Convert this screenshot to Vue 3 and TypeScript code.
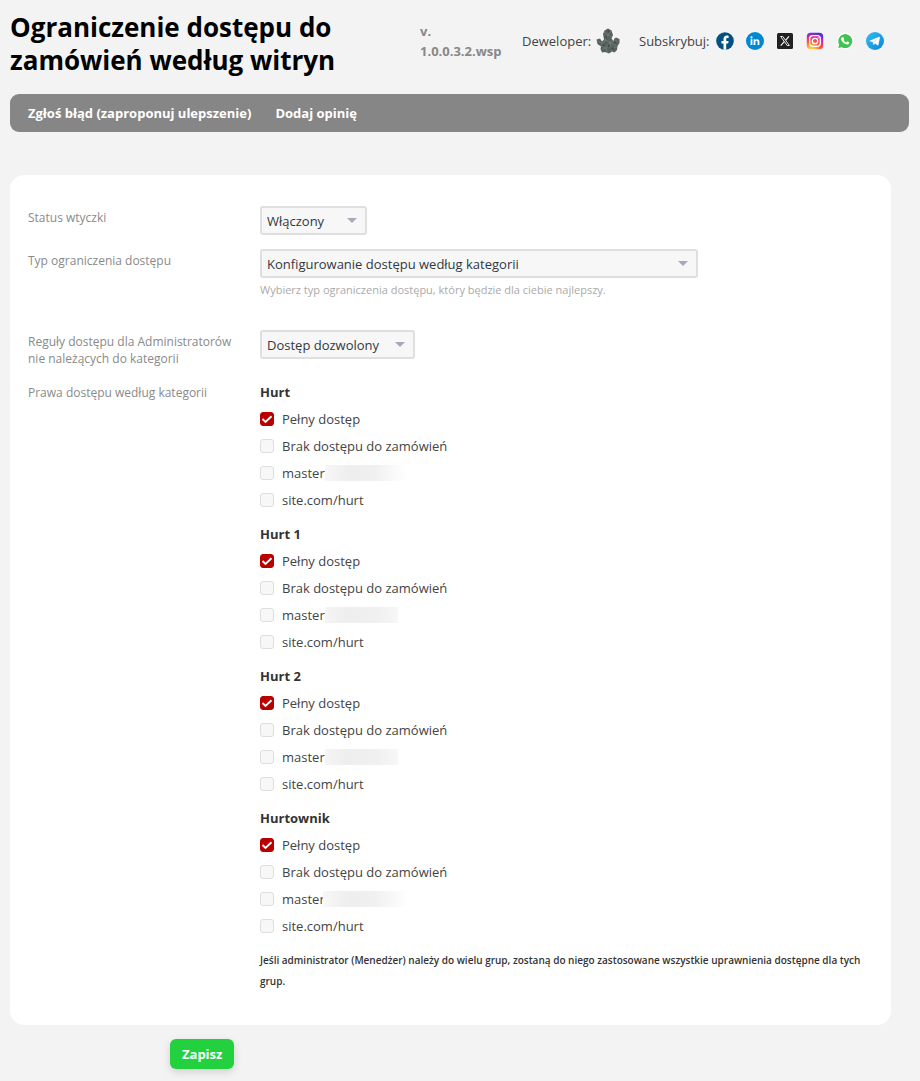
<script setup lang="ts">
import { reactive, ref } from 'vue'

interface Option {
  id: string
  label: string
  checked: boolean
  mask?: string
}

interface Group {
  name: string
  options: Option[]
}

const makeGroup = (name: string, key: string, mask: string): Group => ({
  name,
  options: [
    { id: `${key}-full`, label: 'Pełny dostęp', checked: true },
    { id: `${key}-none`, label: 'Brak dostępu do zamówień', checked: false },
    { id: `${key}-master`, label: 'master', checked: false, mask },
    { id: `${key}-site`, label: 'site.com/hurt', checked: false },
  ],
})

const groups = reactive<Group[]>([
  makeGroup('Hurt', 'hurt', 'mask-soft'),
  makeGroup('Hurt 1', 'hurt1', 'mask-block'),
  makeGroup('Hurt 2', 'hurt2', 'mask-block'),
  makeGroup('Hurtownik', 'hurtownik', 'mask-wide'),
])

const status = ref('on')
const restriction = ref('category')
const rule = ref('allow')
</script>

<template>
  <div class="page">
    <header class="header">
      <h1 class="title">Ograniczenie dostępu do zamówień według witryn</h1>
      <div class="version">v. 1.0.0.3.2.wsp</div>
      <div class="developer">
        <span>Deweloper:</span>
        <a href="#" aria-label="Deweloper">
          <svg class="dev-logo" width="24" height="26" viewBox="0 0 24 26">
            <path fill="#59615f" d="M12 .5 15.500 2.500 17 7 15.500 10.500 17.500 13 18.500 10.500 20 9.500 23.500 11 23.500 15 21.500 18 21 22 18.500 24.500 16 23.500 13 25.500 9 24 6 24.500 4.500 21 5 18.500 1.500 16 .5 11.500 4 10.500 6 13.500 8 11.500 7 6 8.500 2.500Z" />
            <path fill="none" stroke="#858d89" stroke-width=".5" d="M8 4 12 7 15 3M12 7 16 9M12 7 9 12 14 14 17 13M9 12 5 18 10 20 14 14 20 18M10 20 12 25M2 13 5 15 7 14M19 12 22 14M14 14 16 23M7 21 10 20M18 20 21 19" />
            <path fill="#3f4745" d="M9 9 11 8 11 11ZM12 16 14 18 12 19ZM6 17 8 16 8 19ZM18 14 20 14 19 16ZM11 3 13 2 13 5ZM15 19 18 21 16 22Z" />
          </svg>
        </a>
      </div>
      <div class="social">
        <span>Subskrybuj:</span>
        <a href="#" aria-label="Facebook">
          <svg width="18" height="18" viewBox="0 0 18 18">
            <circle cx="9" cy="9" r="8.800" fill="#04507f" />
            <path fill="#fff" d="M7.500 17.700v-6.200H5.400V8.900h2.100V7.200c0-2.500 1.300-3.700 3.300-3.700.8 0 1.500.1 1.800.2v2.200h-1.100c-1 0-1.300.5-1.300 1.300v1.700h2.400l-.4 2.600h-2v6.200Z" />
          </svg>
        </a>
        <a href="#" aria-label="LinkedIn">
          <svg width="18" height="18" viewBox="0 0 18 18">
            <circle cx="9" cy="9" r="9" fill="#0288d1" />
            <circle cx="5.500" cy="5.400" r="1.100" fill="#fff" />
            <path fill="#fff" d="M4.600 7.300h1.800v5.700H4.600ZM7.600 7.300h1.700v.8c.4-.6 1-.9 1.800-.9 1.700 0 2.300 1 2.300 2.600V13h-1.800v-2.800c0-.9-.2-1.500-1-1.500s-1.200.5-1.200 1.500V13H7.600Z" />
          </svg>
        </a>
        <a href="#" aria-label="X">
          <svg width="18" height="18" viewBox="0 0 18 18">
            <rect x="1" y="1" width="16" height="16" rx="1.500" fill="#212121" />
            <path fill="none" stroke="#fff" stroke-width=".9" d="M4.600 4.500h2.200l6.600 9h-2.200Z" />
            <path fill="none" stroke="#fff" stroke-width="1.100" d="M13 4.300 9.700 8.100M8.300 9.700 4.700 13.700" />
          </svg>
        </a>
        <a href="#" aria-label="Instagram">
          <svg width="18" height="18" viewBox="0 0 18 18">
            <defs>
              <radialGradient id="insta" cx=".3" cy="1.050" r="1.100">
                <stop offset="0" stop-color="#ffdd55" />
                <stop offset=".25" stop-color="#ffb13b" />
                <stop offset=".5" stop-color="#ff543e" />
                <stop offset=".75" stop-color="#d42b9c" />
                <stop offset="1" stop-color="#4a2bf0" />
              </radialGradient>
            </defs>
            <rect x=".8" y=".8" width="16.400" height="16.400" rx="4" fill="url(#insta)" />
            <rect x="3.700" y="3.700" width="10.600" height="10.600" rx="3" fill="none" stroke="#fff" stroke-width="1.300" />
            <circle cx="9" cy="9" r="2.700" fill="none" stroke="#fff" stroke-width="1.300" />
            <circle cx="12.100" cy="5.900" r=".7" fill="#fff" />
          </svg>
        </a>
        <a href="#" aria-label="WhatsApp">
          <svg width="18" height="18" viewBox="0 0 18 18">
            <path fill="#fff" d="M1 17.300 2.200 13A8.300 8.300 0 1 1 5.500 16.200Z" />
            <path fill="#40c351" d="M2.200 16.100 3.200 12.600A7 7 0 1 1 5.800 15.200Z" />
            <path fill="#fff" d="M6.600 5.300c.4-.2.800-.1 1 .3l.6 1.300c.1.300 0 .5-.6 1.200.6 1.100 1.500 1.900 2.600 2.400l.8-.9c.2-.2.400-.2.600-.1l1.400.7c.4.200.3.800.1 1.200-.5.900-1.700 1.300-2.800.9-2.200-.7-4.100-2.300-5-4.400-.4-1.100-.1-2.200.7-2.600Z" />
          </svg>
        </a>
        <a href="#" aria-label="Telegram">
          <svg width="18" height="18" viewBox="0 0 18 18">
            <defs>
              <linearGradient id="tele" x1="0" y1="0" x2="1" y2="1">
                <stop offset="0" stop-color="#33bef0" />
                <stop offset="1" stop-color="#0a85d9" />
              </linearGradient>
            </defs>
            <circle cx="9" cy="9" r="9" fill="url(#tele)" />
            <path fill="#fff" d="M3.600 8.700 13.100 4.800c.5-.2.900.1.800.7l-1.500 7.400c-.1.500-.5.700-1 .4L9.100 11.600 8 12.700c-.3.300-.6.200-.7-.2L6.600 10 3.700 9.200c-.4-.1-.4-.4-.1-.5Z" />
            <path fill="none" stroke="#b5d6ee" stroke-width=".7" d="M7.400 12 7.500 10.300 11.600 6.700" />
          </svg>
        </a>
      </div>
    </header>

    <nav class="nav">
      <a href="#">Zgłoś błąd (zaproponuj ulepszenie)</a>
      <a href="#">Dodaj opinię</a>
    </nav>

    <form @submit.prevent>
      <div class="card">
        <div class="row">
          <label class="name" for="status">Status wtyczki</label>
          <div class="field">
            <div class="select select-small">
              <select id="status" v-model="status">
                <option value="on">Włączony</option>
                <option value="off">Wyłączony</option>
              </select>
            </div>
          </div>
        </div>

        <div class="row row-type">
          <label class="name" for="restriction">Typ ograniczenia dostępu</label>
          <div class="field">
            <div class="select select-large">
              <select id="restriction" v-model="restriction">
                <option value="category">Konfigurowanie dostępu według kategorii</option>
              </select>
            </div>
            <p class="hint">Wybierz typ ograniczenia dostępu, który będzie dla ciebie najlepszy.</p>
          </div>
        </div>

        <div class="row row-rule">
          <label class="name" for="rule">Reguły dostępu dla Administratorów nie należących do kategorii</label>
          <div class="field">
            <div class="select select-medium">
              <select id="rule" v-model="rule">
                <option value="allow">Dostęp dozwolony</option>
                <option value="deny">Brak dostępu</option>
              </select>
            </div>
          </div>
        </div>

        <div class="row">
          <div class="name">Prawa dostępu według kategorii</div>
          <div class="groups">
            <fieldset v-for="group in groups" :key="group.name" class="group">
              <legend>{{ group.name }}</legend>
              <label v-for="option in group.options" :key="option.id" class="option" :for="option.id">
                <input :id="option.id" v-model="option.checked" type="checkbox" />
                <span>{{ option.label }}</span>
                <span v-if="option.mask" class="mask" :class="option.mask"></span>
              </label>
            </fieldset>
            <p class="note">
              Jeśli administrator (Menedżer) należy do wielu grup, zostaną do niego zastosowane wszystkie uprawnienia dostępne dla tych grup.
            </p>
          </div>
        </div>
      </div>

      <button class="save" type="submit">Zapisz</button>
    </form>
  </div>
</template>

<style>
html,
body {
  background: #f3f3f3;
}
body {
  margin: 0;
}
</style>

<style scoped>
.page {
  box-sizing: border-box;
  padding: 11px 11px 12px 10px;
  background: #f3f3f3;
  color: #444;
  font: 13px/20px "Open Sans", "Noto Sans", sans-serif;
}
.header {
  display: flex;
  align-items: flex-start;
  height: 83px;
}
.title {
  flex: 0 0 410px;
  box-sizing: border-box;
  margin: 0;
  padding-right: 60px;
  color: #000;
  font-size: 26px;
  font-weight: 700;
  line-height: 33px;
}
.version {
  flex: 0 0 102px;
  box-sizing: border-box;
  padding: 10px 12px 0 0;
  color: #888;
  font-weight: 700;
}
.developer,
.social {
  display: flex;
  align-items: center;
  height: 26px;
  padding-top: 17px;
}
.developer {
  flex: 0 0 117px;
  gap: 5px;
}
.social {
  gap: 12px;
}
.social span {
  margin-right: -6px;
}
.header svg {
  display: block;
}
.nav {
  display: flex;
  align-items: center;
  gap: 24px;
  height: 38px;
  padding: 0 18px;
  border-radius: 9px;
  background: #868686;
}
.nav a {
  color: #fff;
  font-weight: 700;
  text-decoration: none;
}
.card {
  margin: 43px 18px 14px 0;
  padding: 31px 16px 33px 18px;
  border-radius: 14px;
  background: #fff;
}
.row {
  display: grid;
  grid-template-columns: 204px minmax(0, 1fr);
  column-gap: 28px;
  margin-bottom: 14px;
}
.row-type {
  margin-bottom: 31px;
}
.row-rule {
  margin-bottom: 17px;
}
.row:last-child {
  margin-bottom: 0;
}
.name {
  padding-top: 3px;
  color: #8a8a8a;
  font-size: 12px;
  line-height: 17px;
}
.row:last-child .name {
  padding-top: 0;
}
.select {
  position: relative;
  max-width: 100%;
}
.select-small {
  width: 107px;
}
.select-medium {
  width: 155px;
}
.select-large {
  width: 438px;
}
.select select {
  display: block;
  width: 100%;
  height: 29px;
  padding: 0 24px 0 5px;
  border: 2px solid #dfdfdf;
  border-radius: 3px;
  background: #f7f7f7;
  color: #32373f;
  font: inherit;
  appearance: none;
}
.select::after {
  content: "";
  position: absolute;
  top: 12px;
  right: 10px;
  border: 5px solid transparent;
  border-top-color: #a9a8b8;
  border-bottom: 0;
  pointer-events: none;
}
.hint {
  margin: 3px 0 0;
  color: #aaa;
  font-size: 11px;
  line-height: 18px;
}
.group {
  min-width: 0;
  margin: 0 0 10px;
  padding: 0;
  border: 0;
}
.group legend {
  padding: 0 0 2px;
  color: #333;
  font-weight: 700;
  line-height: 22px;
}
.groups {
  margin-top: -3px;
}
.option {
  display: flex;
  align-items: center;
  height: 27px;
}
.option input {
  flex: none;
  width: 14px;
  height: 14px;
  margin: 0 8px 0 0;
  border: 1px solid #dedede;
  border-radius: 3px;
  background: #f7f7f7;
  appearance: none;
}
.option input:checked {
  border-color: #b80000;
  background: #b80000 url("data:image/svg+xml,%3Csvg xmlns='http://www.w3.org/2000/svg' viewBox='0 0 12 12'%3E%3Cpath d='M1.500 6l3 2.900L10.500 3.200' fill='none' stroke='white' stroke-width='1.900'/%3E%3C/svg%3E") center / 12px no-repeat;
}
.mask {
  height: 16px;
  background: linear-gradient(90deg, #f7f7f7, #eee 30%, #f0f0f0 60%, #fff);
}
.mask-soft {
  width: 82px;
}
.mask-block {
  width: 73px;
  background: linear-gradient(90deg, #f5f5f5, #eee 30%, #f0f0f0 70%, #f7f7f7);
}
.mask-wide {
  width: 86px;
  margin-left: -2px;
}
.note {
  margin: 11px 0 0;
  color: #333;
  font-size: 10px;
  font-weight: 600;
  line-height: 21px;
}
.save {
  display: block;
  height: 30px;
  margin-left: 160px;
  padding: 0 12px;
  border: 0;
  border-radius: 6px;
  background: #23d13f;
  box-shadow: 0 3px 8px rgba(0, 0, 0, 0.14);
  color: #fff;
  font: 700 13px/30px "Open Sans", "Noto Sans", sans-serif;
}
</style>
